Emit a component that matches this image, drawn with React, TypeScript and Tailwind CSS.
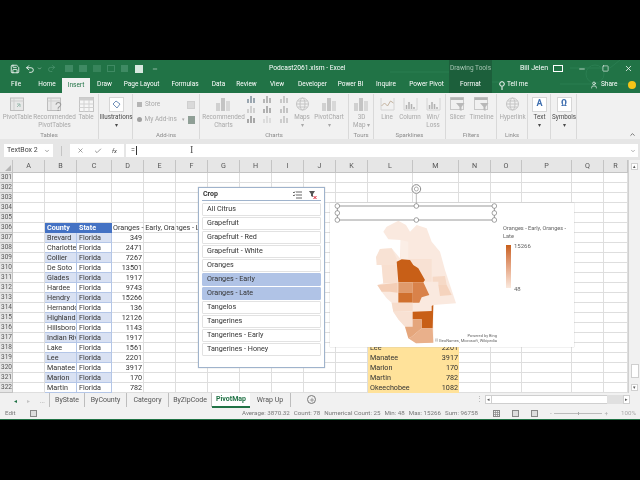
import type { ReactNode } from "react";
import { Check, ChevronDown, ChevronUp, Minus, Plus, Redo2, Save, Square, Undo2, User, X } from "lucide-react";

const colLabels = ["A", "B", "C", "D", "E", "F", "G", "H", "I", "J", "K", "L", "M", "N", "O", "P", "Q", "R"];

const counties: [string, string][] = [
  ["Brevard", "349"],
  ["Charlotte", "2471"],
  ["Collier", "7267"],
  ["De Soto", "13501"],
  ["Glades", "1917"],
  ["Hardee", "9743"],
  ["Hendry", "15266"],
  ["Hernando", "136"],
  ["Highlands", "12126"],
  ["Hillsborough", "1143"],
  ["Indian River", "1917"],
  ["Lake", "1561"],
  ["Lee", "2201"],
  ["Manatee", "3917"],
  ["Marion", "170"],
  ["Martin", "782"],
];

const yellow: Record<number, [string, string]> = {
  318: ["Lee", "2201"],
  319: ["Manatee", "3917"],
  320: ["Marion", "170"],
  321: ["Martin", "782"],
  322: ["Okeechobee", "1082"],
};

const crops = [
  "All Citrus",
  "Grapefruit",
  "Grapefruit - Red",
  "Grapefruit - White",
  "Oranges",
  "Oranges - Early",
  "Oranges - Late",
  "Tangelos",
  "Tangerines",
  "Tangerines - Early",
  "Tangerines - Honey",
];

const tabs: [string, string][] = [
  ["File", "w-[32px]"],
  ["Home", "w-[30px]"],
  ["Insert", "w-[28px]"],
  ["Draw", "w-[29px]"],
  ["Page Layout", "w-[45px]"],
  ["Formulas", "w-[42px]"],
  ["Data", "w-[25px]"],
  ["Review", "w-[31px]"],
  ["View", "w-[30px]"],
  ["Developer", "w-[41px]"],
  ["Power BI", "w-[35px]"],
  ["Inquire", "w-[36px]"],
  ["Power Pivot", "w-[45px]"],
];

const sheets: [string, string][] = [
  ["ByState", "w-[35px]"],
  ["ByCounty", "w-[42px]"],
  ["Category", "w-[42px]"],
  ["ByZipCode", "w-[43px]"],
];

const mapOutline =
  "160,155 170,140 205,122 228,135 240,155 260,135 290,145 305,185 330,215 345,270 378,370 310,375 310,488 258,490 235,475 225,440 205,418 190,395 185,368 170,355 155,335 142,315 160,310 155,255 138,232 150,207 185,205 210,235 212,180 175,178";

const mapShapes: [string, string][] = [
  ["212,180 235,185 235,237 212,238", "#fbeee6"],
  ["150,207 185,205 200,235 198,255 140,255 138,232", "#f8e2d4"],
  ["155,255 200,255 203,308 160,310", "#f8dfcf"],
  ["235,237 305,237 305,305 280,305 260,262", "#f8e1d3"],
  ["200,245 215,238 240,240 250,255 265,265 285,300 280,307 205,307", "#c85f17"],
  ["142,315 203,308 203,338 180,335 155,335", "#f4ceb6"],
  ["205,307 248,307 248,338 205,338", "#e09a6b"],
  ["248,307 280,307 298,345 275,352 268,368 248,368", "#d9824a"],
  ["205,338 248,338 248,368 205,368", "#d0702e"],
  ["308,290 345,288 350,315 325,315 325,305 308,305", "#f6d9c6"],
  ["325,315 350,315 365,345 330,348", "#f5d3bd"],
  ["185,368 248,368 248,393 190,395", "#f7dccb"],
  ["190,395 248,395 248,440 225,440 205,418", "#f8e1d3"],
  ["248,395 305,393 305,378 310,375 308,445 275,445 275,418 248,418", "#c85f17"],
  ["248,418 275,418 275,445 245,470 235,475 225,440 248,440", "#e5a67c"],
  ["275,445 308,445 310,488 258,490 235,475 245,470", "#e9b08b"],
];

// greyed ribbon icons
function DocIcon({ q }: { q?: boolean }) {
  return (
    <svg width="17" height="15" viewBox="0 0 17 15" fill="none">
      <rect x="1.5" y="1" width="13" height="12.5" fill="#e8e8e8" stroke="#bdbdbd" />
      <path d="M1.5 4h13M5 1v12" stroke="#cfcfcf" />
      {q ? (
        <text x="9" y="14" fontSize="12" fill="#9a9a9a" fontFamily="Liberation Sans, sans-serif">?</text>
      ) : (
        <path d="M8 10l3-3m-3 0h3v3" stroke="#9dbbb0" />
      )}
    </svg>
  );
}

function TableIcon() {
  return (
    <svg width="15" height="15" viewBox="0 0 15 15" fill="none">
      <rect x="0.5" y="0.5" width="14" height="14" fill="#f6f6f6" stroke="#c4c4c4" />
      <rect x="0.5" y="0.5" width="14" height="3" fill="#cdcdcd" />
      <path d="M0.5 7h14M0.5 10.5h14M5 3v12M10 3v12" stroke="#d2d2d2" />
    </svg>
  );
}

function BarsIcon() {
  return (
    <svg width="17" height="15" viewBox="0 0 17 15">
      <rect x="1" y="6" width="4" height="8" fill="#d0d0d0" />
      <rect x="6" y="1" width="4" height="13" fill="#c4c4c4" />
      <rect x="11" y="4" width="4" height="10" fill="#d8d8d8" />
    </svg>
  );
}

function SmallChart({ c }: { c: string }) {
  return (
    <svg width="8" height="7" viewBox="0 0 8 7">
      <rect x="0" y="3" width="2" height="4" fill={c} />
      <rect x="3" y="0" width="2" height="7" fill={c} />
      <rect x="6" y="2" width="2" height="5" fill={c} />
    </svg>
  );
}

function GlobeIcon() {
  return (
    <svg width="15" height="15" viewBox="0 0 15 15" fill="none" stroke="#c4c4c4">
      <circle cx="7.5" cy="7" r="6" />
      <ellipse cx="7.5" cy="7" rx="2.5" ry="6" />
      <path d="M1.5 7h12M2.5 4h10M2.5 10h10" />
    </svg>
  );
}

function SparkIcon({ bars }: { bars?: boolean }) {
  return (
    <svg width="15" height="13" viewBox="0 0 15 13" fill="none">
      <path d="M1 0v12h13M14 0v12" stroke="#d4d4d4" />
      {bars ? (
        <path d="M3.5 11V7M6 11V4M8.500 11V6M11 11V9" stroke="#b0b0b0" strokeWidth="1.500" />
      ) : (
        <path d="M1.500 8l3-3 3 3 3-5 3 2" stroke="#c4b39f" />
      )}
    </svg>
  );
}

function FilterIcon() {
  return (
    <svg width="15" height="15" viewBox="0 0 15 15" fill="none">
      <rect x="0.500" y="0.500" width="13" height="12" fill="#f0f0f0" stroke="#c8c8c8" />
      <rect x="0.500" y="0.500" width="13" height="2.500" fill="#b4b4b4" />
      <path d="M6 6h8.500l-3 4v4l-2-1v-3z" fill="#b8b8b8" />
    </svg>
  );
}

function GridIcon({ page }: { page?: boolean }) {
  return (
    <svg width="7" height="7" viewBox="0 0 7 7" fill="none" stroke="#888">
      <rect x="0.500" y="0.500" width="6" height="6" fill={page ? "#dddddd" : "none"} />
      {!page && <path d="M0 2.500h7M0 4.500h7M2.500 0v7M4.500 0v7" strokeWidth="0.700" />}
    </svg>
  );
}

function RibbonButton({ w, icon, lines, dark }: { w: string; icon: ReactNode; lines: string[]; dark?: boolean }) {
  return (
    <div className={`${w} shrink-0 flex flex-col items-center ${dark ? "text-[#4a4a4a]" : "text-[#a8a8a8]"}`}>
      <div className="h-[18px] flex items-center justify-center">{icon}</div>
      {lines.map((l) => (
        <div key={l} className="h-[8px] leading-[8px] whitespace-nowrap text-[6.300px]">{l}</div>
      ))}
    </div>
  );
}

function BoxedIcon({ children }: { children: ReactNode }) {
  return <div className="w-[15px] h-[15px] bg-white border border-[#d6d6d6] flex items-center justify-center text-[9px] font-bold text-[#3f6fb0]">{children}</div>;
}

function Group({ w, label, children, pad }: { w: string; label: string; children: ReactNode; pad?: string }) {
  return (
    <div className={`${w} shrink-0 h-[45px] border-r border-[#d9d9d9] flex flex-col`}>
      <div className={`flex-1 flex ${pad ?? ""}`}>{children}</div>
      <div className="h-[9px] leading-[9px] text-center text-[6px] text-[#8b8b8b]">{label}</div>
    </div>
  );
}

function Ribbon() {
  return (
    <div className="h-[46px] bg-[#f1f1f1] flex pt-[1px] relative">
      <Group w="w-[99px]" label="Tables" pad="pt-[1px] pl-[1px]">
        <RibbonButton w="w-[33px]" icon={<DocIcon />} lines={["PivotTable"]} />
        <RibbonButton w="w-[41px]" icon={<DocIcon q />} lines={["Recommended", "PivotTables"]} />
        <RibbonButton w="w-[22px]" icon={<TableIcon />} lines={["Table"]} />
      </Group>
      <Group w="w-[34px]" label="" pad="pt-[1px]">
        <RibbonButton
          dark
          w="w-[34px]"
          icon={
            <BoxedIcon>
              <svg width="9" height="9" viewBox="0 0 9 9" fill="none" stroke="#6f8fb8"><path d="M1 4l3-3 4 3-3 4z" /></svg>
            </BoxedIcon>
          }
          lines={["Illustrations", "▾"]}
        />
      </Group>
      <Group w="w-[67px]" label="Add-ins" pad="px-[4px] pt-[3px]">
        <div className="w-full text-[#a8a8a8] text-[6.500px] whitespace-nowrap">
          <div className="h-[15px] flex items-center gap-[3px]">
            <div className="w-[5px] h-[5px] bg-[#b5b5b5]" />
            <span>Store</span>
            <div className="ml-auto w-[8px] h-[8px] bg-[#d9d9d9] border border-[#cfcfcf]" />
          </div>
          <div className="h-[15px] flex items-center gap-[3px]">
            <div className="w-[5px] h-[5px] rounded-full bg-[#a0a0a0]" />
            <span>My Add-ins</span>
            <span className="text-[5px] ml-[2px]">▾</span>
            <div className="ml-auto w-[8px] h-[8px] bg-[#8f9f96]" />
          </div>
        </div>
      </Group>
      <Group w="w-[149px]" label="Charts" pad="pt-[1px] pl-[3px]">
        <RibbonButton w="w-[41px]" icon={<BarsIcon />} lines={["Recommended", "Charts"]} />
        <div className="w-[46px] grid grid-cols-3 gap-x-[6px] gap-y-[3px] pt-[1px] pl-[3px] content-start">
          <SmallChart c="#9aa6b0" />
          <SmallChart c="#b6b6b6" />
          <SmallChart c="#c8c8c8" />
          <SmallChart c="#cfcfcf" />
          <SmallChart c="#b0b0b0" />
          <SmallChart c="#c4c4c4" />
          <SmallChart c="#a8a8a8" />
          <SmallChart c="#dcdcdc" />
          <SmallChart c="#cdcdcd" />
        </div>
        <RibbonButton w="w-[24px]" icon={<GlobeIcon />} lines={["Maps", "▾"]} />
        <RibbonButton w="w-[30px]" icon={<BarsIcon />} lines={["PivotChart", "▾"]} />
      </Group>
      <Group w="w-[25px]" label="Tours" pad="pt-[1px]">
        <RibbonButton w="w-[25px]" icon={<BarsIcon />} lines={["3D", "Map ▾"]} />
      </Group>
      <Group w="w-[72px]" label="Sparklines" pad="pt-[1px] pl-[2px]">
        <RibbonButton w="w-[22px]" icon={<SparkIcon />} lines={["Line"]} />
        <RibbonButton w="w-[24px]" icon={<SparkIcon bars />} lines={["Column"]} />
        <RibbonButton w="w-[22px]" icon={<SparkIcon bars />} lines={["Win/", "Loss"]} />
      </Group>
      <Group w="w-[51px]" label="Filters" pad="pt-[1px] pl-[1px]">
        <RibbonButton w="w-[21px]" icon={<FilterIcon />} lines={["Slicer"]} />
        <RibbonButton w="w-[27px]" icon={<FilterIcon />} lines={["Timeline"]} />
      </Group>
      <Group w="w-[31px]" label="Links" pad="pt-[1px]">
        <RibbonButton w="w-[31px]" icon={<GlobeIcon />} lines={["Hyperlink"]} />
      </Group>
      <Group w="w-[23px]" label="" pad="pt-[1px]">
        <RibbonButton dark w="w-[23px]" icon={<BoxedIcon>A</BoxedIcon>} lines={["Text", "▾"]} />
      </Group>
      <Group w="w-[26px]" label="" pad="pt-[1px]">
        <RibbonButton dark w="w-[26px]" icon={<BoxedIcon>Ω</BoxedIcon>} lines={["Symbols", "▾"]} />
      </Group>
      <ChevronUp className="absolute right-[4px] bottom-[1px] size-[7px] text-[#666]" strokeWidth={3} />
    </div>
  );
}

function TitleBars() {
  return (
    <div className="bg-[#217346] text-white relative">
      <svg className="absolute left-[390px] top-0" width="250" height="33" fill="none" stroke="#2a7e51">
        <path d="M0 12h60l12 10h60M70 0l20 14M180 8h40l10-8M170 24h70" />
        <circle cx="85" cy="18" r="10" />
        <circle cx="205" cy="14" r="9" />
      </svg>
      <div className="h-[17px] flex items-center relative">
        <div className="w-[269px] pl-[10px] flex items-center gap-[5px] shrink-0">
          <Save className="size-[10px]" />
          <Undo2 className="size-[10px]" />
          <ChevronDown className="size-[5px] -ml-[3px]" />
          <Redo2 className="size-[9px] text-[#4f9671]" />
          <div className="flex gap-[6px] ml-[4px]">
            <div className="w-[8px] h-[7px] bg-[#3f8a63]" />
            <div className="w-[8px] h-[7px] bg-[#3f8a63]" />
            <div className="w-[8px] h-[7px] bg-[#37845b]" />
            <div className="w-[8px] h-[7px] border border-[#3f8a63]" />
            <div className="w-[7px] h-[7px] bg-[#3f8a63]" />
          </div>
          <div className="w-[8px] h-[8px] bg-[#d8e8df] ml-[2px]" />
          <Minus className="size-[6px] ml-[4px]" />
        </div>
        <div className="w-[180px] shrink-0 text-[6.700px] leading-none whitespace-nowrap">Podcast2061.xlsm - Excel</div>
        <div className="w-[43px] h-full bg-[#1c5f3b] text-[#a5c4b2] text-[6.500px] flex items-center justify-center whitespace-nowrap shrink-0">Drawing Tools</div>
        <div className="ml-[28px] text-[7px] w-[32px] whitespace-nowrap shrink-0">Bill Jelen</div>
        <div className="w-[10px] h-[7px] border border-white ml-[1px] shrink-0" />
        <Minus className="size-[8px] ml-[15px] shrink-0" />
        <Square className="size-[7px] ml-[16px] shrink-0" />
        <X className="size-[9px] ml-[15px] shrink-0" />
      </div>
      <div className="h-[16px] flex items-end text-[6.500px] relative whitespace-nowrap">
        {tabs.map(([name, w]) =>
          name === "Insert" ? (
            <div key={name} className={`${w} shrink-0 h-[15px] bg-[#f1f1f1] text-[#217346] flex items-center justify-center`}>{name}</div>
          ) : (
            <div key={name} className={`${w} shrink-0 h-[16px] flex items-center justify-center`}>{name}</div>
          ),
        )}
        <div className="w-[43px] shrink-0 h-[16px] bg-[#1c5f3b] flex items-center justify-center">Format</div>
        <div className="ml-[7px] h-[16px] flex items-center gap-[2px] shrink-0">
          <svg width="6" height="9" viewBox="0 0 6 9" fill="none" stroke="white"><circle cx="3" cy="3" r="2.300" /><path d="M2 7h2M2.500 8.500h1" /></svg>
          <span>Tell me</span>
        </div>
        <div className="ml-[62px] h-[16px] flex items-center gap-[3px] shrink-0">
          <User className="size-[8px]" />
          <span>Share</span>
        </div>
        <div className="ml-[10px] mb-[4px] w-[8px] h-[8px] rounded-full bg-[#f5c518] shrink-0" />
      </div>
    </div>
  );
}

function FormulaBar() {
  return (
    <div className="h-[21px] bg-[#e6e6e6] flex items-start pt-[5px] text-[#444] text-[7px]">
      <div className="ml-[4px] w-[49px] h-[13px] bg-white flex items-center justify-between px-[3px]">
        <span>TextBox 2</span>
        <ChevronDown className="size-[6px]" />
      </div>
      <div className="ml-[8px] w-[1px] h-[10px] mt-[2px] bg-[#c4c4c4]" />
      <div className="ml-[8px] w-[54px] h-[13px] bg-white flex items-center justify-around px-[2px]">
        <X className="size-[7px] text-[#666]" />
        <Check className="size-[8px] text-[#666]" />
        <span className="italic text-[6px]">fx</span>
      </div>
      <div className="ml-[2px] w-[512px] h-[13px] bg-white flex items-center pl-[5px] relative">
        <span>=</span>
        <div className="w-[1px] h-[9px] bg-[#333] ml-[1px]" />
        <span className="absolute left-[64px] top-0 text-[#555] text-[10px] leading-[12px] font-['Liberation_Serif',serif]">I</span>
        <ChevronDown className="absolute right-[2px] size-[6px] text-[#666]" />
      </div>
    </div>
  );
}

function Slicer() {
  return (
    <div className="absolute left-[198px] top-[27px] w-[127px] h-[181px] bg-white border border-[#9fb3cc] px-[3px] pt-[2px] shadow-[0_0_1px_#bbb]">
      <div className="h-[11px] flex items-center justify-between border-b border-[#9fb3cc] text-[7px] font-bold text-[#333] px-[1px] pb-[1px]">
        <span>Crop</span>
        <div className="flex items-center gap-[7px] pr-[3px]">
          <svg width="9" height="8" viewBox="0 0 9 8" fill="none" stroke="#666"><path d="M3 1h6M3 4h6M3 7h6M0 1l1 1 1-1.500M0 4l1 1 1-1.500" /></svg>
          <svg width="8" height="8" viewBox="0 0 8 8"><path d="M0 0h6l-2 3v3l-2-1v-2z" fill="#555" /><path d="M4.500 5l3 3m0-3l-3 3" stroke="#d23" /></svg>
        </div>
      </div>
      <div className="flex flex-col gap-[1.500px] pt-[2px]">
        {crops.map((c) => (
          <div
            key={c}
            className={`h-[12.500px] rounded-[1px] border flex items-center pl-[4px] text-[7.200px] text-[#333] ${c === "Oranges - Early" || c === "Oranges - Late" ? "bg-[#b0c3e6] border-[#b0c3e6]" : "bg-white border-[#e2e2e2]"}`}
          >
            {c}
          </div>
        ))}
      </div>
    </div>
  );
}

function MapChart() {
  const handles = [[22, 78], [259, 78], [493, 78], [22, 99], [493, 99], [22, 120], [259, 120], [493, 120]];
  return (
    <div className="absolute left-[330px] top-[43px] w-[244px] h-[144px] bg-white shadow-[0_0_1px_#aaa]">
      <svg className="absolute left-0 -top-[23px] overflow-visible" width="250" height="175" viewBox="0 0 750 525" fill="none">
        <polygon points={mapOutline} fill="#fae9df" />
        {mapShapes.map(([points, fill]) => (
          <polygon key={points} points={points} fill={fill} />
        ))}
        <rect x="22" y="78" width="471" height="42" stroke="#9a9a9a" strokeWidth="3" />
        <path d="M259 42v36" stroke="#9a9a9a" strokeWidth="2" />
        <circle cx="259" cy="27" r="13" stroke="#8a8a8a" strokeWidth="3" fill="white" />
        <circle cx="259" cy="27" r="6" stroke="#8a8a8a" strokeWidth="2" />
        {handles.map(([cx, cy]) => (
          <circle key={`${cx}-${cy}`} cx={cx} cy={cy} r="7" fill="white" stroke="#777" strokeWidth="2" />
        ))}
      </svg>
      <div className="absolute left-[173px] top-[21px] w-[68px] text-[5.600px] leading-[8px] text-[#666]">
        <div className="whitespace-nowrap">Oranges - Early, Oranges -</div>
        <div>Late</div>
      </div>
      <div className="absolute left-[176px] top-[42px] w-[5px] h-[43px] bg-gradient-to-b from-[#c85f17] to-[#fae9de]" />
      <div className="absolute left-[184px] top-[38px] text-[6px] text-[#666]">15266</div>
      <div className="absolute left-[184px] top-[81px] text-[6px] text-[#666]">48</div>
      <div className="absolute right-[77px] top-[130px] text-right text-[4px] leading-[5px] text-[#666] whitespace-nowrap">
        <div>Powered by Bing</div>
        <div>© GeoNames, Microsoft, Wikipedia</div>
      </div>
    </div>
  );
}

function Sheet() {
  const rowNums = Array.from({ length: 22 }, (_, i) => 301 + i);
  return (
    <div className="h-[233px] flex relative bg-white overflow-hidden">
      <div className="w-[628px] text-[7.200px] text-[#333]">
        <div className="grid grid-cols-[13px_32px_32px_35px_32px_32px_32px_32px_32px_32px_32px_32px_45px_46px_32px_31px_50px_32px_24px] h-[13px]">
          <div className="bg-[#e6e6e6] border-r border-b border-[#c4c4c4] flex items-end justify-end">
            <div className="w-0 h-0 border-l-[6px] border-l-transparent border-b-[6px] border-b-[#b5b5b5] m-[1px]" />
          </div>
          {colLabels.map((c) => (
            <div key={c} className="bg-[#e6e6e6] border-r border-b border-[#c4c4c4] flex items-center justify-center text-[#555]">{c}</div>
          ))}
        </div>
        <div className="grid grid-cols-[13px_32px_32px_35px_32px_32px_32px_32px_32px_32px_32px_32px_45px_46px_32px_31px_50px_32px_24px] auto-rows-[10px]">
          {rowNums.map((row) => {
            const idx = row - 307;
            const county = idx >= 0 ? counties[idx] : undefined;
            const band = idx % 2 === 0 ? "bg-[#d9e1f2]" : "bg-white";
            const head = row === 306;
            const y = yellow[row];
            return colLabels.map((c, i) => {
              let cls = "border-r border-b border-[#dedede]";
              let txt = "";
              if (c === "B" || c === "C") {
                if (head) {
                  cls = "bg-[#4472c4] text-white font-bold";
                  txt = c === "B" ? "County" : "State";
                } else if (county) {
                  cls = `${band} border-r border-b border-[#b4c6e7]`;
                  txt = c === "B" ? county[0] : "Florida";
                }
              }
              if (c === "D") {
                if (head) txt = "Oranges - Early, Oranges - Late";
                if (county) {
                  txt = county[1];
                  cls += " text-right pr-[1px]";
                }
              }
              if (y && (c === "L" || c === "M")) {
                cls = "bg-[#ffe29a]";
                txt = c === "L" ? y[0] : y[1];
                if (c === "M") cls += " text-right pr-[1px]";
              }
              return (
                <div key={`${row}-${i}`} className="contents">
                  {i === 0 && (
                    <div className="bg-[#e6e6e6] border-r border-b border-[#c4c4c4] overflow-hidden flex items-center justify-end text-[#555] text-[6.500px] leading-none">{row}</div>
                  )}
                  <div className={`${cls} ${c === "D" && head ? "overflow-visible pl-[1px]" : "overflow-hidden pl-[2px]"} whitespace-nowrap leading-[9px]`}>{txt}</div>
                </div>
              );
            });
          })}
        </div>
      </div>
      <div className="w-[12px] bg-[#f1f1f1] border-l border-[#d0d0d0] flex flex-col items-center pt-[3px]">
        <div className="w-[7px] h-[7px] bg-white border border-[#d0d0d0] text-[5px] leading-[5px] text-center text-[#555]">▴</div>
        <div className="flex-1" />
        <div className="w-[8px] h-[14px] bg-white border border-[#cfcfcf] mb-[6px]" />
        <div className="w-[7px] h-[7px] bg-white border border-[#d0d0d0] text-[5px] leading-[5px] text-center text-[#555] mb-[2px]">▾</div>
      </div>
      <Slicer />
      <MapChart />
    </div>
  );
}

function SheetTabs() {
  return (
    <div className="h-[15px] bg-[#f1f1f1] flex items-start text-[7px] text-[#555] whitespace-nowrap">
      <div className="w-[50px] shrink-0 h-[14px] flex items-center pl-[14px] gap-[10px] border-r border-[#bdbdbd] text-[6px]">
        <span className="text-[#217346]">◂</span>
        <span className="text-[#c4c4c4]">▸</span>
        <span className="text-[#777]">...</span>
      </div>
      {sheets.map(([s, w]) => (
        <div key={s} className={`${w} shrink-0 h-[14px] border-r border-[#bdbdbd] flex items-center justify-center`}>{s}</div>
      ))}
      <div className="w-[38px] shrink-0 h-[15px] bg-white border-b-2 border-[#217346] font-bold text-[#217346] flex items-center justify-center">PivotMap</div>
      <div className="w-[41px] shrink-0 h-[14px] border-r border-[#bdbdbd] flex items-center justify-center">Wrap Up</div>
      <div className="ml-[16px] mt-[2px] w-[9px] h-[9px] shrink-0 rounded-full border border-[#777] flex items-center justify-center">
        <Plus className="size-[6px]" />
      </div>
      <div className="ml-[160px] mt-[1px] w-[3px] shrink-0 text-[#aaa] leading-[10px]">⋮</div>
      <div className="ml-[6px] mt-[2px] w-[145px] shrink-0 h-[9px] flex bg-[#e0e0e0]">
        <div className="w-[7px] bg-white border border-[#cfcfcf] text-[5px] leading-[7px] text-center">◂</div>
        <div className="w-[115px] bg-white border-y border-[#cfcfcf]" />
        <div className="flex-1" />
        <div className="w-[7px] bg-white border border-[#cfcfcf] text-[5px] leading-[7px] text-center">▸</div>
      </div>
    </div>
  );
}

function StatusBar() {
  return (
    <div className="h-[12px] bg-[#f1f1f1] border-b border-[#217346] flex items-center text-[6.200px] text-[#777] whitespace-nowrap">
      <span className="ml-[5px] w-[25px] shrink-0">Edit</span>
      <GridIcon page />
      <div className="ml-[205px] w-[236px] shrink-0 flex justify-between">
        <span>Average: 3870.32</span>
        <span>Count: 78</span>
        <span>Numerical Count: 25</span>
        <span>Min: 48</span>
        <span>Max: 15266</span>
        <span>Sum: 96758</span>
      </div>
      <div className="ml-[15px] flex gap-[12px] shrink-0">
        <GridIcon />
        <GridIcon page />
        <GridIcon page />
      </div>
      <div className="ml-[12px] w-[58px] shrink-0 flex items-center justify-between text-[#aaa]">
        <span className="leading-none">-</span>
        <div className="w-[48px] h-[1px] bg-[#bbb] flex justify-center">
          <div className="w-[1px] h-[3px] -mt-[1px] bg-[#aaa]" />
        </div>
        <span className="leading-none">+</span>
      </div>
      <span className="ml-auto mr-[4px] text-[#aaa]">100%</span>
    </div>
  );
}

export default function App() {
  return (
    <div className="w-[640px] h-[480px] bg-black flex flex-col justify-center overflow-hidden font-['Roboto',sans-serif]">
      <div className="w-[640px] h-[360px] flex flex-col bg-white shrink-0 blur-[0.3px]">
        <TitleBars />
        <Ribbon />
        <FormulaBar />
        <Sheet />
        <SheetTabs />
        <StatusBar />
      </div>
    </div>
  );
}
